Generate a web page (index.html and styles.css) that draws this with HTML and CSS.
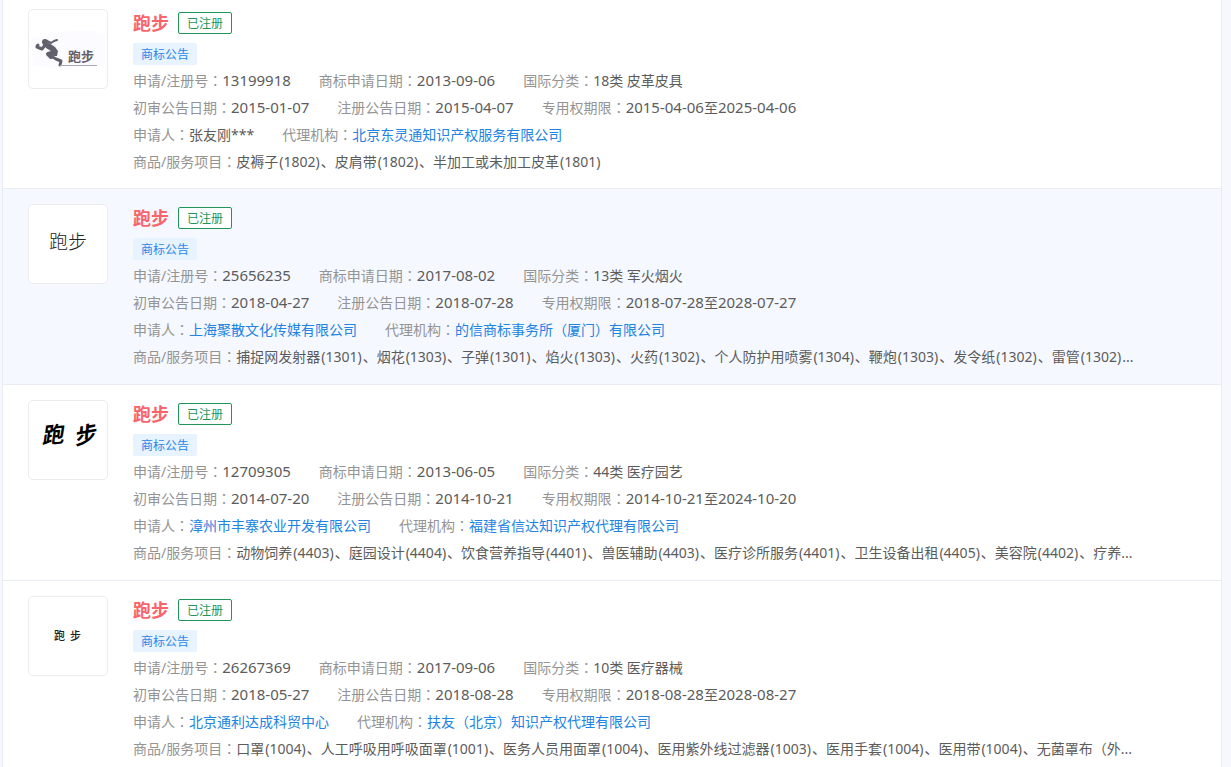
FILE: index.html
```
<!DOCTYPE html>
<html lang="zh-CN">
<head>
<meta charset="utf-8">
<title>跑步</title>
<link rel="stylesheet" href="styles.css">
</head>
<body>
<main class="results">
  <article class="item">
    <div class="thumb">
      <svg viewBox="0 0 78 78" role="img" aria-label="跑步">
        <path class="wash" d="M2 28 L30 22 L60 20 L76 24 L76 54 L40 59 L4 56Z"/>
        <path class="torso" d="M14 34 L20 33 L26 37 L29 41 L28 46 L24 46 L22 41 L17 38Z"/>
        <path class="limb" d="M16 35 L13 39 L8 37 M8 36 L9 35"/>
        <path class="limb thin" d="M18 31 L22 33 L25 31 L28 30"/>
        <path class="limb mid" d="M26 42 L19 44 L22 47"/>
        <path class="limb" d="M22 46 L27 49 L32 51 L31 55"/>
        <circle class="head" cx="16" cy="32" r="3"/>
        <path class="ground" d="M31 55.500 H68"/>
        <text class="mark mark-run" x="39" y="51">跑步</text>
      </svg>
    </div>
    <div class="info">
      <div class="head-row"><h3 class="name">跑步</h3><span class="status">已注册</span></div>
      <div class="line"><span class="tag">商标公告</span></div>
      <div class="line">
        <span class="field"><span class="label">申请/注册号<span class="colon" lang="zh-TW">：</span></span><span class="num">13199918</span></span>
        <span class="field"><span class="label">商标申请日期<span class="colon" lang="zh-TW">：</span></span><span class="num">2013-09-06</span></span>
        <span class="field"><span class="label">国际分类<span class="colon" lang="zh-TW">：</span></span>18类 皮革皮具</span>
      </div>
      <div class="line">
        <span class="field"><span class="label">初审公告日期<span class="colon" lang="zh-TW">：</span></span><span class="num">2015-01-07</span></span>
        <span class="field"><span class="label">注册公告日期<span class="colon" lang="zh-TW">：</span></span><span class="num">2015-04-07</span></span>
        <span class="field"><span class="label">专用权期限<span class="colon" lang="zh-TW">：</span></span><span class="num">2015-04-06</span>至<span class="num">2025-04-06</span></span>
      </div>
      <div class="line">
        <span class="field"><span class="label">申请人<span class="colon" lang="zh-TW">：</span></span>张友刚***</span>
        <span class="field"><span class="label">代理机构<span class="colon" lang="zh-TW">：</span></span><a href="#">北京东灵通知识产权服务有限公司</a></span>
      </div>
      <div class="line">
        <span class="field"><span class="label">商品/服务项目<span class="colon" lang="zh-TW">：</span></span>皮褥子<span class="code">(1802)</span>、皮肩带<span class="code">(1802)</span>、半加工或未加工皮革<span class="code">(1801)</span></span>
      </div>
    </div>
  </article>

  <article class="item active">
    <div class="thumb">
      <svg viewBox="0 0 78 78" role="img" aria-label="跑步">
        <text class="mark mark-light" x="20" y="44">跑步</text>
      </svg>
    </div>
    <div class="info">
      <div class="head-row"><h3 class="name">跑步</h3><span class="status">已注册</span></div>
      <div class="line"><span class="tag">商标公告</span></div>
      <div class="line">
        <span class="field"><span class="label">申请/注册号<span class="colon" lang="zh-TW">：</span></span><span class="num">25656235</span></span>
        <span class="field"><span class="label">商标申请日期<span class="colon" lang="zh-TW">：</span></span><span class="num">2017-08-02</span></span>
        <span class="field"><span class="label">国际分类<span class="colon" lang="zh-TW">：</span></span>13类 军火烟火</span>
      </div>
      <div class="line">
        <span class="field"><span class="label">初审公告日期<span class="colon" lang="zh-TW">：</span></span><span class="num">2018-04-27</span></span>
        <span class="field"><span class="label">注册公告日期<span class="colon" lang="zh-TW">：</span></span><span class="num">2018-07-28</span></span>
        <span class="field"><span class="label">专用权期限<span class="colon" lang="zh-TW">：</span></span><span class="num">2018-07-28</span>至<span class="num">2028-07-27</span></span>
      </div>
      <div class="line">
        <span class="field"><span class="label">申请人<span class="colon" lang="zh-TW">：</span></span><a href="#">上海聚散文化传媒有限公司</a></span>
        <span class="field"><span class="label">代理机构<span class="colon" lang="zh-TW">：</span></span><a href="#">的信商标事务所（厦门）有限公司</a></span>
      </div>
      <div class="line">
        <span class="field"><span class="label">商品/服务项目<span class="colon" lang="zh-TW">：</span></span>捕捉网发射器<span class="code">(1301)</span>、烟花<span class="code">(1303)</span>、子弹<span class="code">(1301)</span>、焰火<span class="code">(1303)</span>、火药<span class="code">(1302)</span>、个人防护用喷雾<span class="code">(1304)</span>、鞭炮<span class="code">(1303)</span>、发令纸<span class="code">(1302)</span>、雷管<span class="code">(1302)</span>...</span>
      </div>
    </div>
  </article>

  <article class="item">
    <div class="thumb">
      <svg viewBox="0 0 78 78" role="img" aria-label="跑步">
        <text class="mark mark-brush" x="13" y="43" rotate="-6">跑</text>
        <text class="mark mark-brush" x="46" y="44" rotate="-10">步</text>
      </svg>
    </div>
    <div class="info">
      <div class="head-row"><h3 class="name">跑步</h3><span class="status">已注册</span></div>
      <div class="line"><span class="tag">商标公告</span></div>
      <div class="line">
        <span class="field"><span class="label">申请/注册号<span class="colon" lang="zh-TW">：</span></span><span class="num">12709305</span></span>
        <span class="field"><span class="label">商标申请日期<span class="colon" lang="zh-TW">：</span></span><span class="num">2013-06-05</span></span>
        <span class="field"><span class="label">国际分类<span class="colon" lang="zh-TW">：</span></span>44类 医疗园艺</span>
      </div>
      <div class="line">
        <span class="field"><span class="label">初审公告日期<span class="colon" lang="zh-TW">：</span></span><span class="num">2014-07-20</span></span>
        <span class="field"><span class="label">注册公告日期<span class="colon" lang="zh-TW">：</span></span><span class="num">2014-10-21</span></span>
        <span class="field"><span class="label">专用权期限<span class="colon" lang="zh-TW">：</span></span><span class="num">2014-10-21</span>至<span class="num">2024-10-20</span></span>
      </div>
      <div class="line">
        <span class="field"><span class="label">申请人<span class="colon" lang="zh-TW">：</span></span><a href="#">漳州市丰寨农业开发有限公司</a></span>
        <span class="field"><span class="label">代理机构<span class="colon" lang="zh-TW">：</span></span><a href="#">福建省信达知识产权代理有限公司</a></span>
      </div>
      <div class="line">
        <span class="field"><span class="label">商品/服务项目<span class="colon" lang="zh-TW">：</span></span>动物饲养<span class="code">(4403)</span>、庭园设计<span class="code">(4404)</span>、饮食营养指导<span class="code">(4401)</span>、兽医辅助<span class="code">(4403)</span>、医疗诊所服务<span class="code">(4401)</span>、卫生设备出租<span class="code">(4405)</span>、美容院<span class="code">(4402)</span>、疗养...</span>
      </div>
    </div>
  </article>

  <article class="item">
    <div class="thumb">
      <svg viewBox="0 0 78 78" role="img" aria-label="跑步">
        <text class="mark mark-small" x="25" y="43">跑</text>
        <text class="mark mark-small" x="41" y="43">步</text>
      </svg>
    </div>
    <div class="info">
      <div class="head-row"><h3 class="name">跑步</h3><span class="status">已注册</span></div>
      <div class="line"><span class="tag">商标公告</span></div>
      <div class="line">
        <span class="field"><span class="label">申请/注册号<span class="colon" lang="zh-TW">：</span></span><span class="num">26267369</span></span>
        <span class="field"><span class="label">商标申请日期<span class="colon" lang="zh-TW">：</span></span><span class="num">2017-09-06</span></span>
        <span class="field"><span class="label">国际分类<span class="colon" lang="zh-TW">：</span></span>10类 医疗器械</span>
      </div>
      <div class="line">
        <span class="field"><span class="label">初审公告日期<span class="colon" lang="zh-TW">：</span></span><span class="num">2018-05-27</span></span>
        <span class="field"><span class="label">注册公告日期<span class="colon" lang="zh-TW">：</span></span><span class="num">2018-08-28</span></span>
        <span class="field"><span class="label">专用权期限<span class="colon" lang="zh-TW">：</span></span><span class="num">2018-08-28</span>至<span class="num">2028-08-27</span></span>
      </div>
      <div class="line">
        <span class="field"><span class="label">申请人<span class="colon" lang="zh-TW">：</span></span><a href="#">北京通利达成科贸中心</a></span>
        <span class="field"><span class="label">代理机构<span class="colon" lang="zh-TW">：</span></span><a href="#">扶友（北京）知识产权代理有限公司</a></span>
      </div>
      <div class="line">
        <span class="field"><span class="label">商品/服务项目<span class="colon" lang="zh-TW">：</span></span>口罩<span class="code">(1004)</span>、人工呼吸用呼吸面罩<span class="code">(1001)</span>、医务人员用面罩<span class="code">(1004)</span>、医用紫外线过滤器<span class="code">(1003)</span>、医用手套<span class="code">(1004)</span>、医用带<span class="code">(1004)</span>、无菌罩布（外...</span>
      </div>
    </div>
  </article>
</main>
</body>
</html>
```
FILE: styles.css
```
* {
  box-sizing: border-box;
}

html {
  overflow: hidden;
}

body {
  margin: 0;
  background: #f7f8fd;
  color: #5c5c5c;
  font: 14px/27px "Noto Sans", "Noto Sans CJK SC", sans-serif;
}

.results {
  margin: 0 9px 0 2px;
  background: #fff;
  border: solid #e9ecf2;
  border-width: 0 1px;
}

.item {
  display: flex;
  gap: 25px;
  padding: 15px 25px 14px;
  border-bottom: 1px solid #e9ecf2;
}

.item:first-child {
  padding: 9px 25px 13px;
}

.item.active {
  background: #f5f8ff;
}

.thumb {
  flex: none;
  width: 80px;
  height: 80px;
  background: #fff;
  border: 1px solid #ececf0;
  border-radius: 5px;
}

.thumb svg {
  display: block;
  width: 100%;
  height: 100%;
}

.info {
  flex: 1;
  min-width: 0;
}

.head-row {
  display: flex;
  align-items: center;
  gap: 9px;
  height: 28px;
  margin-bottom: 3px;
}

.name {
  margin: 0;
  color: #f9636a;
  font-size: 18px;
  line-height: 28px;
}

.status {
  padding: 1px 8px 0;
  border: 1px solid #219558;
  border-radius: 2px;
  color: #219558;
  font-size: 12px;
  line-height: 19px;
  background: #fff;
}

.line {
  display: flex;
  align-items: center;
  gap: 28px;
  height: 27px;
  white-space: nowrap;
}

.tag {
  padding: 1px 8px 0;
  border-radius: 2px;
  background: #e7f3ff;
  color: #2b86e8;
  font-size: 12px;
  line-height: 21px;
}

.label {
  color: #949494;
}

.colon {
  font-family: "Noto Sans CJK TC", sans-serif;
}

.num {
  font-size: 15px;
}

.code {
  margin: 0 1px;
}

a {
  color: #2183e2;
  text-decoration: none;
}

.mark {
  font-family: "Noto Sans CJK SC", sans-serif;
  fill: #222;
}

.mark-run {
  font-size: 13px;
  font-weight: 700;
  fill: #62606c;
}

.mark-light {
  font-size: 19px;
  font-weight: 300;
}

.mark-brush {
  font-size: 22px;
  font-style: italic;
  font-weight: 700;
  fill: #000;
}

.mark-small {
  font-size: 11px;
  font-weight: 500;
}

.wash {
  fill: #fcfbff;
}

.torso,
.head {
  fill: #62606c;
}

.limb {
  fill: none;
  stroke: #62606c;
  stroke-width: 3;
  stroke-linecap: round;
  stroke-linejoin: round;
}

.limb.thin {
  stroke-width: 2;
}

.limb.mid {
  stroke-width: 4;
}

.ground {
  stroke: #a9a8b6;
  stroke-width: 1;
}
```
